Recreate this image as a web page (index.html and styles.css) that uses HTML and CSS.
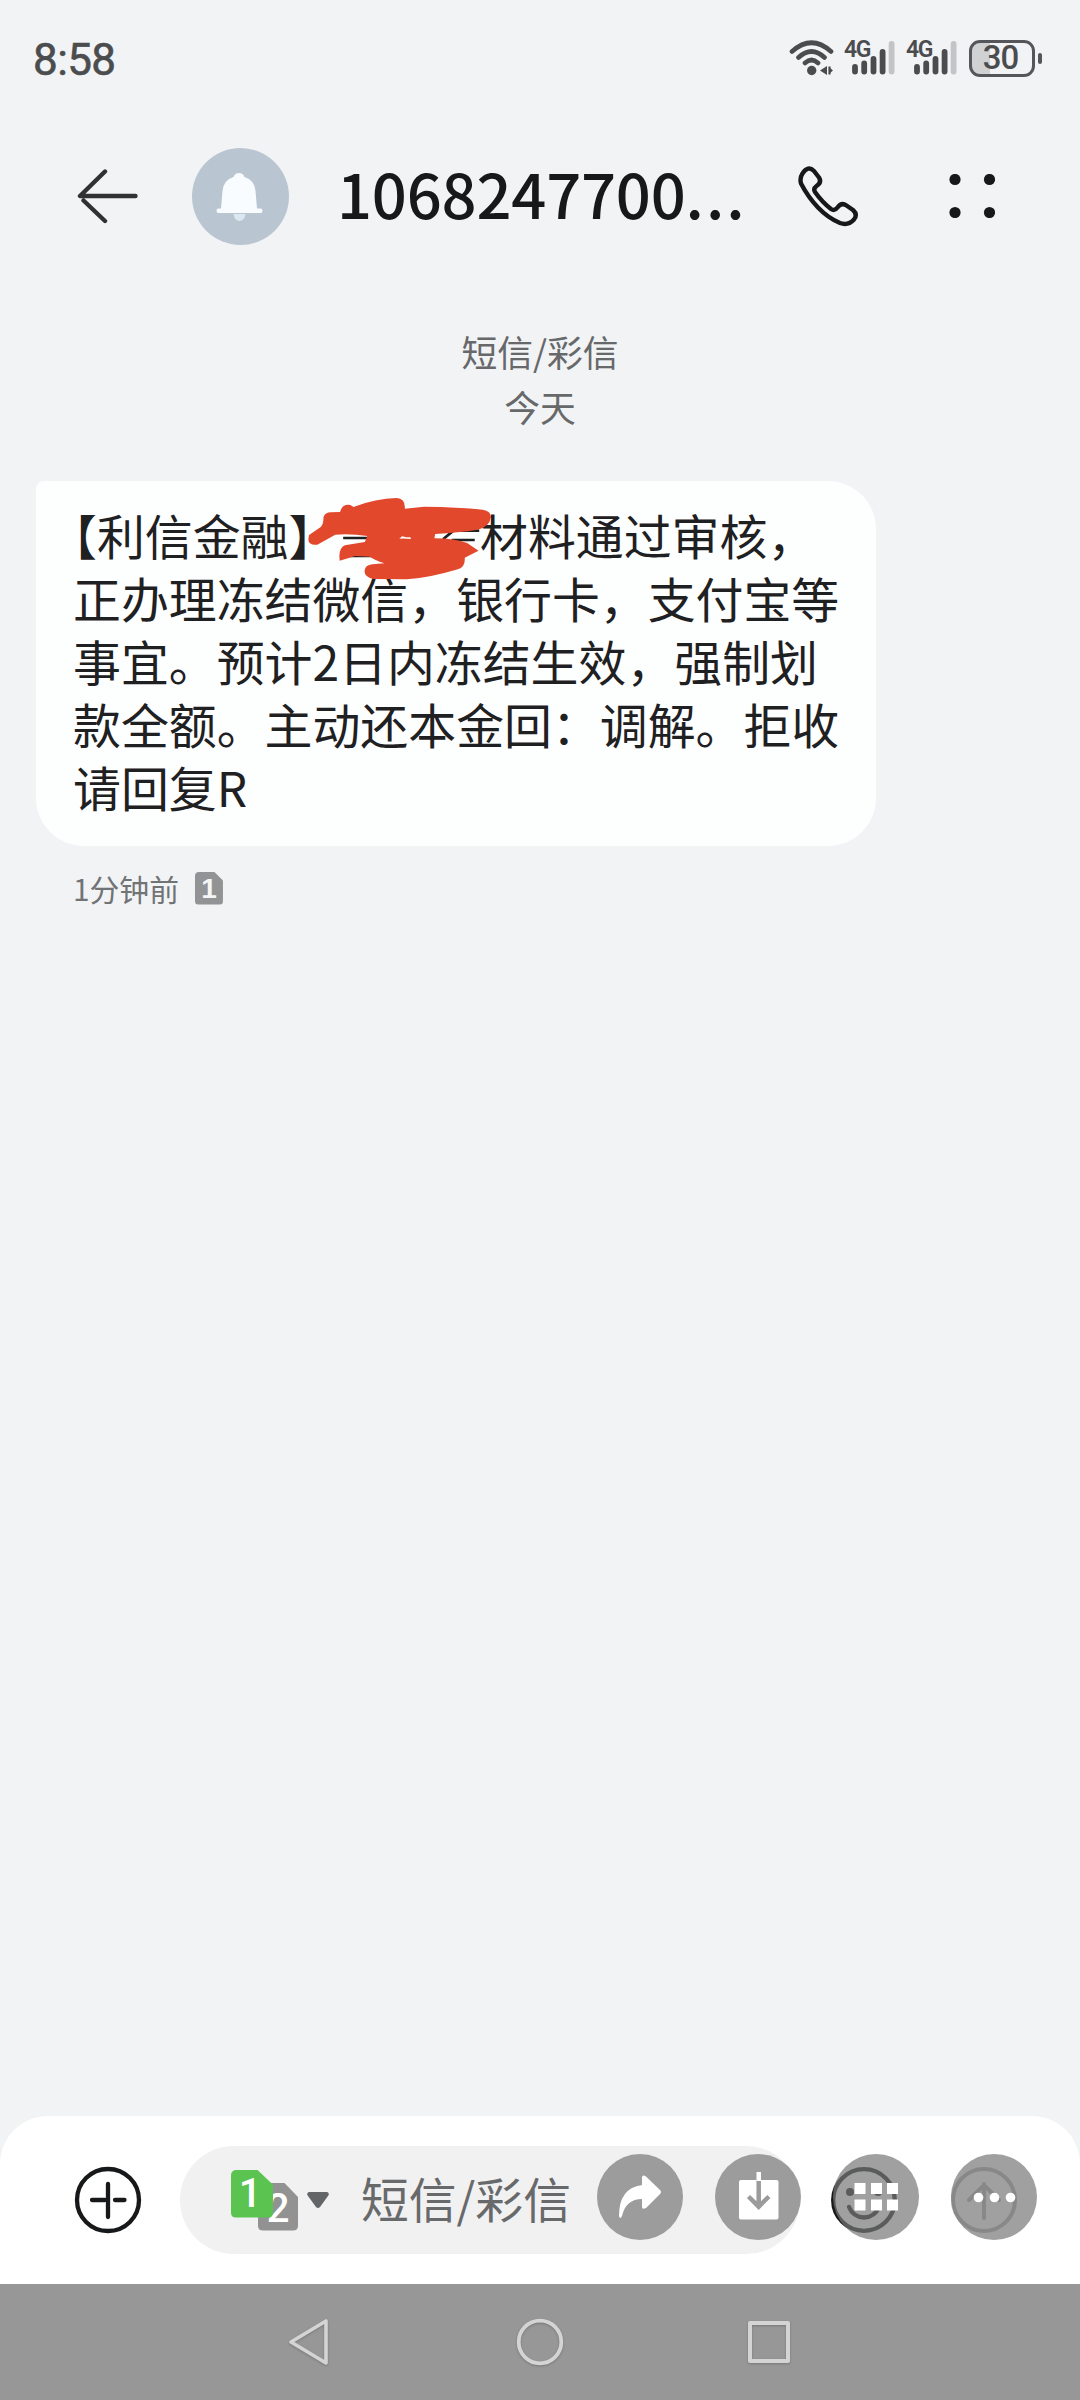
FILE: index.html
```html
<!DOCTYPE html>
<html lang="zh-CN">
<head>
<meta charset="utf-8">
<title>短信/彩信</title>
<link rel="stylesheet" href="styles.css">
</head>
<body>
<div class="screen">
  <div class="status">
    <span class="clock">8:58</span>
    <div class="indicators">
      <svg class="wifi" width="46" height="38" viewBox="0 0 46 38" fill="none" stroke="#4b4c4e" stroke-width="4.6" stroke-linecap="round">
        <path d="M3 12.500Q22.500-5 42 12.500M9.500 18.500Q22.500 6.500 35.500 18.500M16 24Q22.500 18 29 24"/>
        <circle cx="22.700" cy="31.500" r="4.700" fill="#4b4c4e" stroke="none"/>
        <path d="M38 27v9l-7-4.500zM40 27.500v8M40.500 28.500l3.500 3-3.500 3z" fill="#4b4c4e" stroke="none"/>
        <path d="M40.500 27.500v8" stroke-width="2.200" stroke-linecap="butt"/>
      </svg>
      <div class="signal">
        <span class="net">4G</span>
        <svg width="44" height="36" viewBox="0 0 44 36" stroke-width="5.800" stroke-linecap="round" stroke="#4b4c4e"><path d="M4 27v4.500M13.200 23.500v8M22.500 19v12.500M31.600 12v19.500"/><path d="M40.600 4v27.500" stroke="#c3c4c5"/></svg>
      </div>
      <div class="signal">
        <span class="net">4G</span>
        <svg width="44" height="36" viewBox="0 0 44 36" stroke-width="5.800" stroke-linecap="round" stroke="#4b4c4e"><path d="M4 27v4.500M13.200 23.500v8M22.500 19v12.500M31.600 12v19.500"/><path d="M40.600 4v27.500" stroke="#c3c4c5"/></svg>
      </div>
      <div class="battery"><span class="battery-level">30</span></div>
      <span class="battery-tip"></span>
    </div>
  </div>

  <header class="header">
    <svg class="back" width="62" height="58" viewBox="0 0 62 58" fill="none" stroke="#303133" stroke-width="4.400" stroke-linecap="round" stroke-linejoin="round"><path d="M28 4.500L3 29h55.500M6.500 33.500L28 54"/></svg>
    <svg class="avatar" width="97" height="97" viewBox="0 0 97 97">
      <circle cx="48.500" cy="48.500" r="48.500" fill="#bac5d2"/>
      <path d="M41.500 66h12q-1 7-6 7t-6-7z" fill="#dde7f0"/>
      <path d="M47 25q4 0 5.500 4 10 3 11 14l1.500 17.500h3.500q2 0 2 2.300t-2 2.200H26.500q-2 0-2-2.200t2-2.300H29L30.500 43q1-11 11-14 1.500-4 5.500-4z" fill="#f8fcff"/>
    </svg>
    <h1 class="title">1068247700<span class="dots">...</span></h1>
    <svg class="phone" width="64" height="64" viewBox="0 0 64 64" fill="none" stroke="#17181a" stroke-width="4.400" stroke-linejoin="round"><path d="M6.500 9.500Q12 1 18 7l5 6.500q3 5-2.500 8.500-3.500 2.500-1.500 6Q26 38 35 45q3.500 2.500 6.500-1.500 4-5.500 9-2L57 46q5 4.500 1 9.500-6 6.500-14 3.500-12-5-22-15.500T5 19.500Q3.500 14 6.500 9.500z"/></svg>
    <svg class="more" width="46" height="44" viewBox="0 0 46 44" fill="#17181a"><circle cx="6" cy="5.500" r="5.600"/><circle cx="40.500" cy="5.500" r="5.600"/><circle cx="6" cy="38.500" r="5.600"/><circle cx="40.500" cy="38.500" r="5.600"/></svg>
  </header>

  <main class="thread">
    <div class="day">短信/彩信<br>今天</div>
    <div class="bubble">
      <p class="message">【利信金融】<span class="redacted"></span>材料通过审核，<br>正办理冻结微信，银行卡，支付宝等<br>事宜。预计2日内冻结生效，强制划<br>款全额。主动还本金回：调解。拒收<br>请回复R</p>
      <svg class="scribble" width="186" height="85" viewBox="890 105 540 255" preserveAspectRatio="none">
        <path d="M995 231h70M1015 285h60M1165 231h25M1285 235l30-26h75M1310 237h67" stroke="#1f2022" stroke-width="8" fill="none"/>
        <path d="M896 222L930 198Q938 190 938 168Q942 154 960 154L986 153Q992 128 1016 132L1025 138Q1090 112 1150 111Q1176 112 1174 143L1230 137Q1330 138 1400 146Q1424 150 1424 168Q1420 198 1385 206Q1330 215 1262 219L1260 232Q1320 232 1355 246L1388 269L1348 290Q1350 318 1328 325Q1240 352 1180 355L1085 354Q1057 350 1057 330Q1058 312 1080 310L1115 307Q1085 296 1072 287L1030 285L985 299Q980 262 1000 253L1058 243L1065 225Q1020 218 972 221L920 251Q894 254 894 235Z" fill="#e2482b"/>
        <path d="M1158 233l8-7 12 3 12 0 2 5q-18-2-34-1z" fill="#fff"/>
      </svg>
    </div>
    <div class="meta">
      <span>1分钟前</span>
      <span class="sim-badge">1</span>
    </div>
  </main>

  <footer class="composer">
    <svg class="plus" width="68" height="68" viewBox="0 0 68 68" fill="none" stroke="#17181a" stroke-width="4.300" stroke-linecap="round"><circle cx="34" cy="34" r="31"/><path d="M34 18v33M18 34h13M41 34h9.500"/></svg>
    <div class="input">
      <div class="sims">
        <span class="sim sim-two">2</span>
        <span class="sim sim-one">1</span>
      </div>
      <svg class="caret" width="22" height="17" viewBox="0 0 22 17"><path d="M2 0h18q3 1 1 4l-8 11q-2 2-4 0L1 4Q-1 1 2 0z" fill="#646566"/></svg>
      <span class="placeholder">短信/彩信</span>
    </div>
    <svg class="emoji" width="66" height="66" viewBox="0 0 66 66" fill="none" stroke="#17181a" stroke-width="4.300" stroke-linecap="round"><circle cx="33" cy="33" r="30.800"/><circle cx="19" cy="25" r="4" fill="#17181a" stroke="none"/><circle cx="47" cy="25" r="4" fill="#17181a" stroke="none"/><path d="M18 40q4 10 15 10.500Q44 50 48 40"/></svg>
    <svg class="send" width="66" height="66" viewBox="0 0 66 66" fill="none" stroke="#adadad" stroke-width="4" stroke-linecap="round"><circle cx="33" cy="33" r="31"/><path d="M33 51V17M18 33l15-15 15 15"/></svg>
    <div class="tools">
      <svg width="86" height="86" viewBox="0 0 86 86" fill="#fff"><path d="M45 24q0-4 4-1.500L63 36q2 2 0 4L49 54q-4 2-4-1v-8Q29 45 25 62q-2 4-3 0 0-28 23-31z"/></svg>
      <svg width="86" height="86" viewBox="0 0 86 86"><path d="M26 26h35.500q2 0 2 2v35.500q0 2-2 2H26q-2 0-2-2V28q0-2 2-2z" fill="#fff"/><path d="M43.700 26v27M33.500 42.500l10.200 10.200 10.200-10.200" stroke="#9b9b9b" stroke-width="4.500" fill="none"/><path d="M41.500 18h4.500v9h-4.500z" fill="#fff"/></svg>
      <svg width="86" height="86" viewBox="0 0 86 86" fill="#fff"><path d="M21.500 29h11v11h-11zM38 29h11v11H38zM54 29h11v11H54zM21.500 45.500h11v11h-11zM38 45.500h11v11H38zM54 45.500h11v11H54z"/></svg>
      <svg width="86" height="86" viewBox="0 0 86 86" fill="#fff"><circle cx="27.500" cy="43.500" r="4.800"/><circle cx="43.500" cy="43.500" r="4.800"/><circle cx="59.500" cy="43.500" r="4.800"/></svg>
    </div>
  </footer>

  <nav class="nav">
    <svg width="42" height="48" viewBox="0 0 42 48" fill="none" stroke="#d4d4d4" stroke-width="3.600" stroke-linejoin="round"><path d="M38 3v42L3 24z"/></svg>
    <svg width="48" height="48" viewBox="0 0 48 48" fill="none" stroke="#d4d4d4" stroke-width="3.800"><circle cx="24" cy="24" r="21.300"/></svg>
    <svg width="44" height="44" viewBox="0 0 44 44" fill="none" stroke="#d4d4d4" stroke-width="4" stroke-linejoin="round"><path d="M3 3h38v38H3z"/></svg>
  </nav>
</div>
</body>
</html>
```
FILE: styles.css
```css
* { box-sizing: border-box; }
body {
  margin: 0;
  background: #f1f3f5;
  font-family: "Noto Sans CJK SC", sans-serif;
  color: #1f2022;
}
svg { display: block; flex: none; }
.screen {
  width: 1080px;
  height: 2400px;
  display: flex;
  flex-direction: column;
  overflow: hidden;
}

/* Status bar */
.status {
  height: 118px;
  padding: 2px 38px 0 33px;
  display: flex;
  align-items: center;
  justify-content: space-between;
  color: #4b4c4e;
}
.clock {
  font: 400 44px/52px Roboto, sans-serif;
  letter-spacing: -0.6px;
  -webkit-text-stroke: 0.6px #4b4c4e;
}
.indicators { display: flex; align-items: center; height: 38px; margin-bottom: 4px; }
.wifi { margin-right: 10px; }
.signal {
  position: relative;
  width: 52px;
  height: 36px;
  margin-right: 10px;
  padding-left: 6px;
}
.net {
  position: absolute;
  left: -1px;
  top: -2px;
  font: 600 23px/23px Roboto, sans-serif;
  letter-spacing: -1.5px;
}
.battery {
  width: 66px;
  height: 37px;
  border: 3px solid #55565a;
  border-radius: 11px;
  background: linear-gradient(90deg, #d0d1d3 18px, transparent 18px);
  display: flex;
  align-items: center;
  justify-content: center;
}
.battery-level { font: 500 33px/32px Roboto, sans-serif; letter-spacing: -1px; margin-right: 3px; }
.battery-tip { width: 4px; height: 11px; margin-left: 3px; border-radius: 2px; background: #55565a; }

/* Conversation header */
.header {
  height: 156px;
  padding: 0 85px 0 77px;
  display: flex;
  align-items: center;
}
.avatar { margin-left: 53px; }
.title {
  flex: 1;
  min-width: 0;
  margin: -6px 0 0 48px;
  font: 500 61.500px/80px "Noto Sans CJK SC", sans-serif;
  letter-spacing: -0.200px;
  color: #17181a;
  white-space: nowrap;
}
.dots { letter-spacing: 2px; }
.more { margin-left: 89px; }

/* Messages */
.thread { flex: 1; padding: 50px 36px 0; }
.day {
  font-size: 35.800px;
  line-height: 55px;
  text-align: center;
  color: #67686a;
}
.bubble {
  position: relative;
  width: 840px;
  height: 365px;
  margin-top: 47px;
  padding: 22px 0 0 37px;
  border-radius: 8px 48px 48px 48px;
  background: #fdfefe;
}
.message {
  margin: 0;
  font-size: 47.900px;
  line-height: 62.900px;
  text-indent: -24px;
  white-space: nowrap;
  text-spacing-trim: space-all;
}
.redacted { display: inline-block; width: 3em; }
.scribble { position: absolute; left: 271px; top: 15px; }
.meta {
  display: flex;
  align-items: center;
  gap: 16px;
  height: 44px;
  margin: 20px 0 0 37px;
  font-size: 29.800px;
  color: #727375;
}
.sim-badge {
  width: 28px;
  height: 33px;
  border-radius: 4px;
  background: #929394;
  clip-path: polygon(0 0, 68% 0, 100% 27%, 100% 100%, 0 100%);
  color: #f4f5f6;
  font: 700 28px/34px "Liberation Sans", sans-serif;
  text-align: center;
}

/* Composer */
.composer {
  position: relative;
  height: 168px;
  padding-left: 74px;
  display: flex;
  align-items: center;
  border-radius: 48px 48px 0 0;
  background: #fff;
}
.input {
  width: 620px;
  height: 108px;
  margin-left: 38px;
  padding-left: 51px;
  display: flex;
  align-items: center;
  border-radius: 54px;
  background: #f1f1f2;
}
.sims { position: relative; width: 67px; height: 61px; }
.sim {
  position: absolute;
  border-radius: 5px;
  color: #fff;
  font: 500 40px/48px Roboto, sans-serif;
  text-align: center;
}
.sim-one {
  left: 0;
  top: 0;
  width: 42px;
  height: 48px;
  padding-right: 4px;
  background: #5bc34f;
  clip-path: polygon(0 0, 62% 0, 100% 32%, 100% 100%, 0 100%);
}
.sim-two {
  left: 27px;
  top: 13px;
  width: 40px;
  height: 48px;
  line-height: 52px;
  background: #929292;
  clip-path: polygon(0 0, 65% 0, 100% 30%, 100% 100%, 0 100%);
}
.caret { margin-left: 9px; }
.placeholder { margin: -4px 0 0 32px; font-size: 47.800px; line-height: 60px; color: #68696b; }
.emoji { margin-left: 31px; }
.send { margin-left: 54px; }
.tools { position: absolute; left: 597px; top: 38px; display: flex; gap: 32px; }
.tools svg { border-radius: 50%; background: rgba(119, 119, 119, 0.7); }

/* System navigation */
.nav {
  height: 116px;
  display: grid;
  grid-template-columns: 40px 48px 44px;
  column-gap: 188px;
  padding-left: 288px;
  align-items: center;
  background: #979797;
}
.nav svg { filter: drop-shadow(0 1px 1px #777); }
.nav svg:last-child { margin-left: -5px; }
```
